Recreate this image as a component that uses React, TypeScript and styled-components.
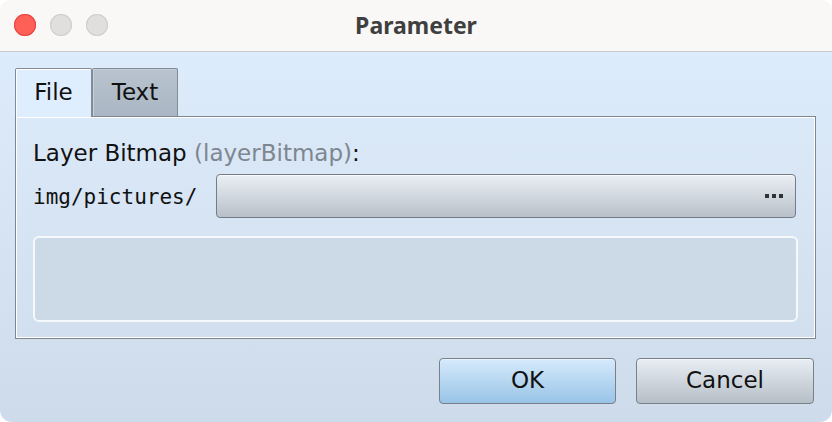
import React from "react";
import styled, { createGlobalStyle } from "styled-components";

const Global = createGlobalStyle`
  html, body { margin: 0; padding: 0; background: #ffffff; }
  body { font-family: "DejaVu Sans", "Noto Sans", sans-serif; }
  * { box-sizing: border-box; }
`;

const Window = styled.div`
  width: 832px;
  height: 422px;
  border-radius: 12px;
  overflow: hidden;
  display: flex;
  flex-direction: column;
  background: linear-gradient(#dfeefe, #cedbea);
`;

const TitleBar = styled.div`
  position: relative;
  height: 52px;
  flex: none;
  background: #f9f8f6;
  border-bottom: 1px solid #c6c8cb;
  display: flex;
  align-items: center;
  justify-content: center;
`;

const Lights = styled.div`
  position: absolute;
  left: 14px;
  top: 14px;
  display: flex;
  gap: 14px;
`;

const Light = styled.span<{ $color: string; $edge: string }>`
  width: 22px;
  height: 22px;
  border-radius: 50%;
  background: ${(p) => p.$color};
  box-shadow: inset 0 0 0 1px ${(p) => p.$edge};
`;

const Title = styled.div`
  font-family: "Noto Sans", sans-serif;
  font-weight: 700;
  font-size: 23px;
  color: #3f3f3f;
  margin-top: -2px;
`;

const Body = styled.div`
  flex: 1;
  display: flex;
  flex-direction: column;
  padding: 16px 18px 18px 15px;
`;

const TabRow = styled.div`
  display: flex;
  align-items: flex-end;
  height: 48px;
`;

const Tab = styled.div<{ $active?: boolean; $w: number }>`
  position: relative;
  z-index: ${(p) => (p.$active ? 2 : 1)};
  width: ${(p) => p.$w}px;
  height: ${(p) => (p.$active ? 49 : 48)}px;
  margin-bottom: ${(p) => (p.$active ? -1 : 0)}px;
  border: 1px solid #848b94;
  border-bottom: none;
  border-radius: 2px 2px 0 0;
  background: ${(p) =>
    p.$active ? "#dfeefe" : "linear-gradient(#b8c3cf, #aab6c3)"};
  box-shadow: inset 1px 1px 0 ${(p) => (p.$active ? "#ffffff" : "#c6cfd9")};
  display: flex;
  align-items: center;
  justify-content: center;
  padding-bottom: ${(p) => (p.$active ? 3 : 2)}px;
  font-size: 23px;
  color: #111;
`;

const Panel = styled.div`
  margin-right: -2px;
  height: 223px;
  border: 1px solid #7f8690;
  box-shadow: inset 1px 1px 0 #ffffff, inset -1px -1px 0 #ffffff;
  padding: 23px 17px 16px 17px;
  display: flex;
  flex-direction: column;
`;

const Label = styled.div`
  font-size: 23px;
  color: #111;
  line-height: 26px;
  height: 26px;
  white-space: nowrap;
`;

const Hint = styled.span`
  color: #7e868f;
`;

const PathRow = styled.div`
  margin-top: 8px;
  display: flex;
  align-items: center;
  gap: 19px;
`;

const Prefix = styled.span`
  font-family: "DejaVu Sans Mono", monospace;
  font-size: 21px;
  color: #111;
  margin-top: 2px;
`;

const PickButton = styled.div`
  flex: 1;
  height: 44px;
  margin-right: 2px;
  border: 1px solid #767c85;
  border-radius: 4px;
  background: linear-gradient(#eaeff4, #b8c0c9);
  box-shadow: inset 0 1px 0 #f8fbfd;
  display: flex;
  align-items: center;
  justify-content: flex-end;
  padding-right: 12px;
`;

const Dots = styled.div`
  display: flex;
  gap: 3px;
  span {
    width: 4px;
    height: 4px;
    background: #2f3338;
  }
`;

const Note = styled.div`
  margin-top: 18px;
  height: 87px;
  border: 2px solid #f6f9fc;
  border-radius: 6px;
  background: #ccd9e7;
`;

const Footer = styled.div`
  margin-top: 19px;
  display: flex;
  justify-content: flex-end;
  gap: 20px;
`;

const Button = styled.div<{ $primary?: boolean }>`
  width: ${(p) => (p.$primary ? 177 : 178)}px;
  height: 46px;
  border: 1px solid #7b8088;
  border-radius: 4px;
  background: ${(p) =>
    p.$primary
      ? "linear-gradient(#d6eafc, #98c4e7)"
      : "linear-gradient(#e8eef4, #b6bec7)"};
  box-shadow: inset 0 1px 0 ${(p) => (p.$primary ? "#e6f2fd" : "#f4f7fa")};
  display: flex;
  align-items: center;
  justify-content: center;
  padding-bottom: 2px;
  font-size: 23px;
  color: #111;
`;

export default function App() {
  return (
    <>
      <Global />
      <Window>
        <TitleBar>
          <Lights>
            <Light $color="#fe5f57" $edge="#e6463f" />
            <Light $color="#e0dfdd" $edge="#cfcecc" />
            <Light $color="#e0dfdd" $edge="#cfcecc" />
          </Lights>
          <Title>Parameter</Title>
        </TitleBar>
        <Body>
          <TabRow>
            <Tab $active $w={77}>File</Tab>
            <Tab $w={86}>Text</Tab>
          </TabRow>
          <Panel>
            <Label>
              Layer Bitmap <Hint>(layerBitmap)</Hint>:
            </Label>
            <PathRow>
              <Prefix>img/pictures/</Prefix>
              <PickButton>
                <Dots>
                  <span />
                  <span />
                  <span />
                </Dots>
              </PickButton>
            </PathRow>
            <Note />
          </Panel>
          <Footer>
            <Button $primary>OK</Button>
            <Button>Cancel</Button>
          </Footer>
        </Body>
      </Window>
    </>
  );
}
